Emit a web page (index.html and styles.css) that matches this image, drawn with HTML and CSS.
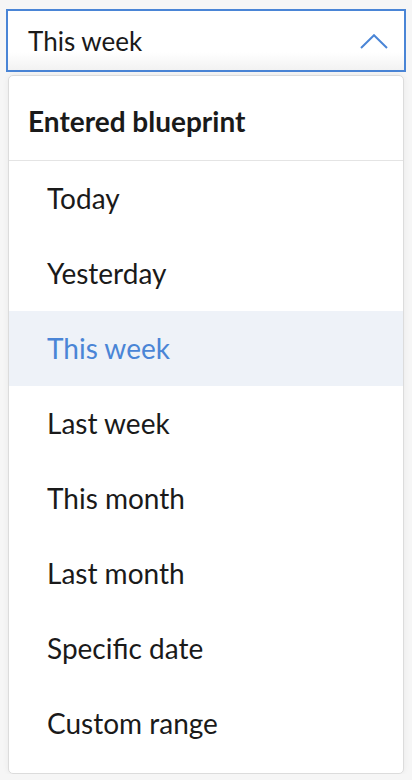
FILE: index.html
```html
<!DOCTYPE html>
<html lang="en">
<head>
  <meta charset="UTF-8" />
  <meta name="viewport" content="width=device-width, initial-scale=1.0"/>
  <title>Entered blueprint filter</title>
  <link rel="stylesheet" href="styles.css">
</head>
<body>

  <div class="select-box">
    <span class="select-value">This week</span>
    <svg class="chevron" width="28" height="15" viewBox="0 0 28 15">
      <polyline points="1,14 14,1.2 27,14" fill="none" stroke="#4a85d6" stroke-width="2"/>
    </svg>
  </div>

  <div class="dropdown">
    <div class="dropdown-title">Entered blueprint</div>
    <ul class="option-list">
      <li>Today</li>
      <li>Yesterday</li>
      <li class="selected">This week</li>
      <li>Last week</li>
      <li>This month</li>
      <li>Last month</li>
      <li>Specific date</li>
      <li>Custom range</li>
    </ul>
  </div>

</body>
</html>
```

FILE: styles.css
```css
body {
  font-family: Lato, "Open Sans", sans-serif;
  background: #f6f6f6;
  margin: 0;
  padding: 9px 6px 0;
  color: #1a1a1a;
}

.select-box {
  height: 59px;
  border: 2px solid #4a85d6;
  background: linear-gradient(#fff 70%, #f2f2f2);
  display: flex;
  align-items: center;
  justify-content: space-between;
  padding: 0 16px 0 20px;
}

.select-value {
  font-size: 26px;
}

.chevron {
  display: block;
  margin-top: 1px;
}

.dropdown {
  margin: 3px 2px 0;
  background: #fff;
  border: 1px solid #dcdcdc;
  border-radius: 5px;
  box-shadow: 0 0 6px rgba(0,0,0,0.06);
  padding-bottom: 12px;
}

.dropdown-title {
  height: 85px;
  line-height: 91px;
  padding-left: 19px;
  font-size: 28px;
  font-weight: bold;
  border-bottom: 1px solid #e4e4e4;
  box-sizing: border-box;
}

.option-list {
  list-style: none;
  margin: 0;
  padding: 0;
}

.option-list li {
  height: 75px;
  line-height: 75px;
  padding-left: 38px;
  font-size: 28px;
}

.option-list li.selected {
  background: #eef2f8;
  color: #4a85d6;
}
```
